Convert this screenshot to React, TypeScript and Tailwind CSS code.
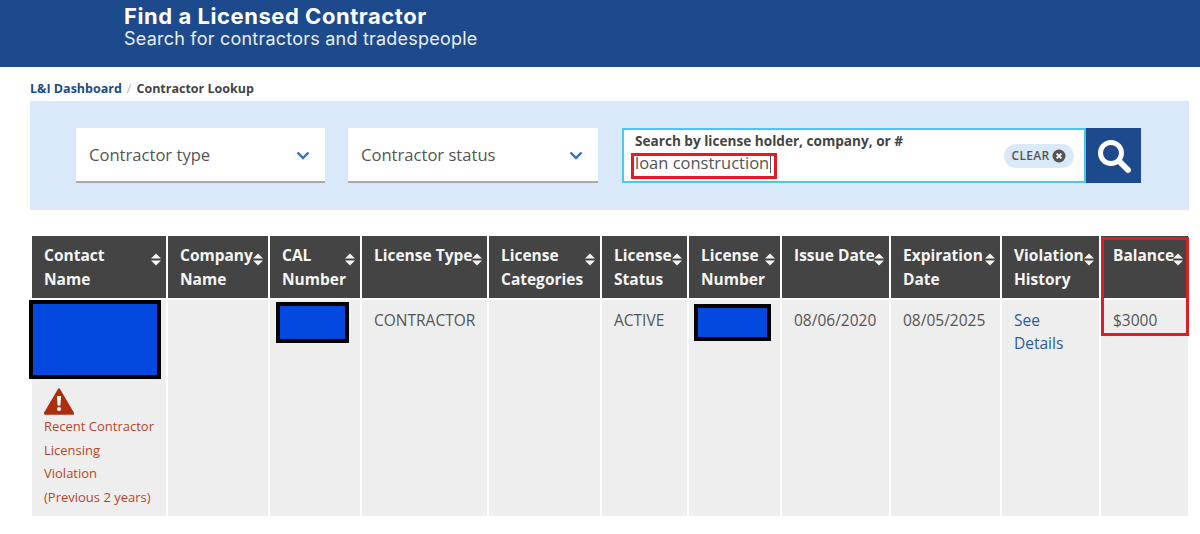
const headers = [
  ['Contact', 'Name'],
  ['Company', 'Name'],
  ['CAL', 'Number'],
  ['License Type', ''],
  ['License', 'Categories'],
  ['License', 'Status'],
  ['License', 'Number'],
  ['Issue Date', ''],
  ['Expiration', 'Date'],
  ['Violation', 'History'],
  ['Balance', ''],
]

function SortCaret() {
  return (
    <svg width="10" height="13" viewBox="0 0 10 13" className="shrink-0 mt-[10px] text-[#f4f4f4]" fill="currentColor">
      <path d="M5 .5 10 5.5H0z" />
      <path d="M0 7.5h10l-5 5z" />
    </svg>
  )
}

function Chevron() {
  return (
    <svg width="14" height="9" viewBox="0 0 14 9" fill="none" stroke="#2f6fc4" strokeWidth="2.4">
      <path d="M1.5 1.5 7 7l5.5-5.5" />
    </svg>
  )
}

function Dropdown({ label, width }: { label: string; width: string }) {
  return (
    <div className={`${width} h-[55px] bg-white border-b-2 border-[#a9a9a9] flex items-center justify-between pl-[13px] pr-[15px] pt-[2px] text-[#555] text-[16.6px]`}>
      <span>{label}</span>
      <Chevron />
    </div>
  )
}

function Redacted({ className }: { className: string }) {
  return <div className={`bg-[#0349e0] border-[4px] border-black ${className}`} />
}

export default function App() {
  return (
    <div className="w-[1200px] h-[534px] overflow-hidden bg-white text-[#555] font-['Open_Sans',sans-serif]">
      <header className="h-[67px] bg-[#1d4a8c] pl-[124px] pt-[3px] text-white">
        <h1 className="font-['Inter',sans-serif] font-bold text-[22px] tracking-[0.55px] leading-[26px]">Find a Licensed Contractor</h1>
        <p className="font-['Inter',sans-serif] text-[18px] tracking-[0.22px] leading-[20px] text-[#e8eef7]">Search for contractors and tradespeople</p>
      </header>

      <nav className="ml-[30px] mt-[13px] h-[21px] text-[12.5px] leading-[17px] font-bold text-[#444]">
        <span className="text-[#1d4a8c]">L&amp;I Dashboard</span>
        <span className="text-[#bbb] font-normal mx-[5px]">/</span>
        <span>Contractor Lookup</span>
      </nav>

      <section className="ml-[30px] w-[1159px] h-[109px] bg-[#d9e9fa] pt-[27px] pl-[46px] flex">
        <Dropdown label="Contractor type" width="w-[249px]" />
        <div className="w-[23px]" />
        <Dropdown label="Contractor status" width="w-[250px]" />
        <div className="w-[24px]" />
        <div className="w-[464px] h-[55px] bg-white border-2 border-[#46c8f0] relative pl-[11px] flex flex-col">
          <span className="text-[13.6px] leading-[18px] mt-[2px] font-bold text-[#444]">Search by license holder, company, or #</span>
          <span className="text-[16.5px] leading-[22px] text-[#555] mt-[2px] flex items-center">
            loan construction
            <span className="w-[1px] h-[19px] bg-[#555] ml-[1px]" />
          </span>
          <div className="absolute left-[7px] top-[23px] w-[146px] h-[26px] border-[3px] border-[#e31b23]" />
          <div className="absolute right-[10px] top-[14px] h-[24px] w-[70px] rounded-full bg-[#d9e9fa] flex items-center justify-center gap-[3px] text-[12px] tracking-[0.3px] font-semibold text-[#555]">
            CLEAR
            <svg width="14" height="14" viewBox="0 0 14 14" className="shrink-0">
              <circle cx="7" cy="7" r="6.5" fill="#555" />
              <path d="M4.6 4.6l4.8 4.8M9.4 4.6l-4.8 4.8" stroke="#fff" strokeWidth="1.8" />
            </svg>
          </div>
        </div>
        <div className="w-[55px] h-[55px] bg-[#1d4a8c] flex items-center justify-center">
          <svg width="36" height="36" viewBox="0 0 36 36" fill="none" stroke="#fff">
            <circle cx="15" cy="15" r="10.5" strokeWidth="5" />
            <path d="M23 23l9 9" strokeWidth="6" strokeLinecap="round" />
          </svg>
        </div>
      </section>

      <div className="relative ml-[32px] mt-[26px] w-[1157px] grid grid-cols-[134px_100px_90px_125px_111px_85px_91px_107px_109px_97px_87px] gap-[2px] text-[15.5px]">
        {headers.map(([a, b]) => (
          <div key={a + b} className="h-[62px] bg-[#444] text-[#f5f5f5] font-bold leading-[24px] pt-[7px] pl-3 pr-[5px] flex">
            <span className="flex-1 min-w-0 whitespace-nowrap">
              {a}
              <br />
              {b}
            </span>
            <SortCaret />
          </div>
        ))}

        <div className="h-[216px] bg-[#eee]">
          <Redacted className="w-[132px] h-[79px] -ml-[3px]" />
          <div className="pl-3 pt-[9px] text-[13px] leading-[23.5px] text-[#b8452a]">
            <svg width="30" height="27" viewBox="0 0 30 27" className="block">
              <path d="M15 1.5 29 25.5H1z" fill="#ad2f0c" stroke="#ad2f0c" strokeWidth="2.4" strokeLinejoin="round" />
              <path d="M13 8h4l-.6 9.5h-2.8z" fill="#fff" />
              <circle cx="15" cy="21" r="2" fill="#fff" />
            </svg>
            <div>Recent Contractor</div>
            <div>Licensing</div>
            <div>Violation</div>
            <div>(Previous 2 years)</div>
          </div>
        </div>
        <div className="bg-[#eee]" />
        <div className="bg-[#eee] pt-[2px] pl-[6px]">
          <Redacted className="w-[73px] h-[41px]" />
        </div>
        <div className="bg-[#eee] pl-3 pt-[8px] leading-[24px]">CONTRACTOR</div>
        <div className="bg-[#eee]" />
        <div className="bg-[#eee] pl-3 pt-[8px] leading-[24px]">ACTIVE</div>
        <div className="bg-[#eee] pt-[4px] pl-[5px]">
          <Redacted className="w-[77px] h-[37px]" />
        </div>
        <div className="bg-[#eee] pl-3 pt-[8px] leading-[24px]">08/06/2020</div>
        <div className="bg-[#eee] pl-3 pt-[8px] leading-[24px]">08/05/2025</div>
        <div className="bg-[#eee] pl-3 pt-[9px] leading-[23px] text-[#2a5ba3]">
          See
          <br />
          Details
        </div>
        <div className="bg-[#eee] pl-3 pt-[8px] leading-[24px]">$3000</div>

        <div className="absolute left-[1069px] top-[1px] w-[88px] h-[99px] border-[3px] border-[#e31b23]" />
      </div>
    </div>
  )
}
